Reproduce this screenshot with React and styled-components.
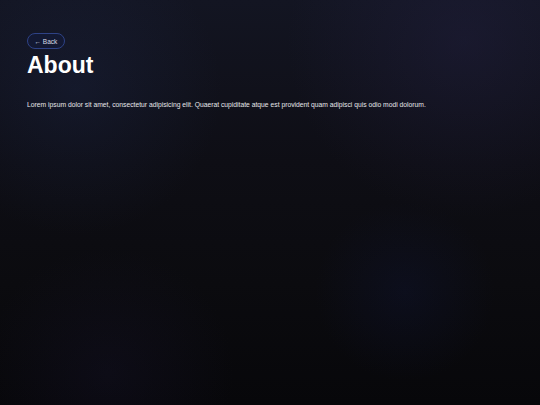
import styled, { createGlobalStyle } from "styled-components";

const GlobalStyle = createGlobalStyle`
  html, body {
    margin: 0;
    padding: 0;
    background: #09090c;
  }
  * {
    box-sizing: border-box;
  }
`;

const Page = styled.div`
  min-height: 405px;
  width: 100%;
  padding: 33px 27px;
  display: flex;
  flex-direction: column;
  align-items: flex-start;
  font-family: "Liberation Sans", Arial, sans-serif;
  color: #fff;
  background:
    radial-gradient(circle at 14% 22%, rgba(36, 52, 100, 0.22), transparent 26%),
    radial-gradient(circle at 86% 10%, rgba(42, 38, 80, 0.3), transparent 30%),
    radial-gradient(circle at 75% 72%, rgba(18, 26, 70, 0.25), transparent 18%),
    radial-gradient(circle at 20% 92%, rgba(28, 24, 56, 0.25), transparent 22%),
    linear-gradient(180deg, #131522 0%, #0e0e15 40%, #0b0b0f 70%, #07070a 100%);
`;

const BackButton = styled.button`
  display: flex;
  align-items: center;
  gap: 2px;
  height: 16px;
  padding: 0 6.5px;
  border: 1px solid #2e4286;
  border-radius: 999px;
  background: #131933;
  color: #d8dbe6;
  font-family: inherit;
  font-size: 6.5px;
  cursor: pointer;
`;

const Title = styled.h1`
  margin: 3px 0 0;
  font-size: 23px;
  line-height: 27px;
  font-weight: 700;
`;

const Text = styled.p`
  margin: 21px 0 0;
  font-size: 6.75px;
  line-height: 9px;
  color: #e6e6ea;
`;

const App = () => {
  return <>
    <GlobalStyle />
    <Page>
      <BackButton>← Back</BackButton>
      <Title>About</Title>
      <Text>Lorem ipsum dolor sit amet, consectetur adipisicing elit. Quaerat cupiditate atque est provident quam adipisci quis odio modi dolorum.</Text>
    </Page>
  </>
}

export default App;
